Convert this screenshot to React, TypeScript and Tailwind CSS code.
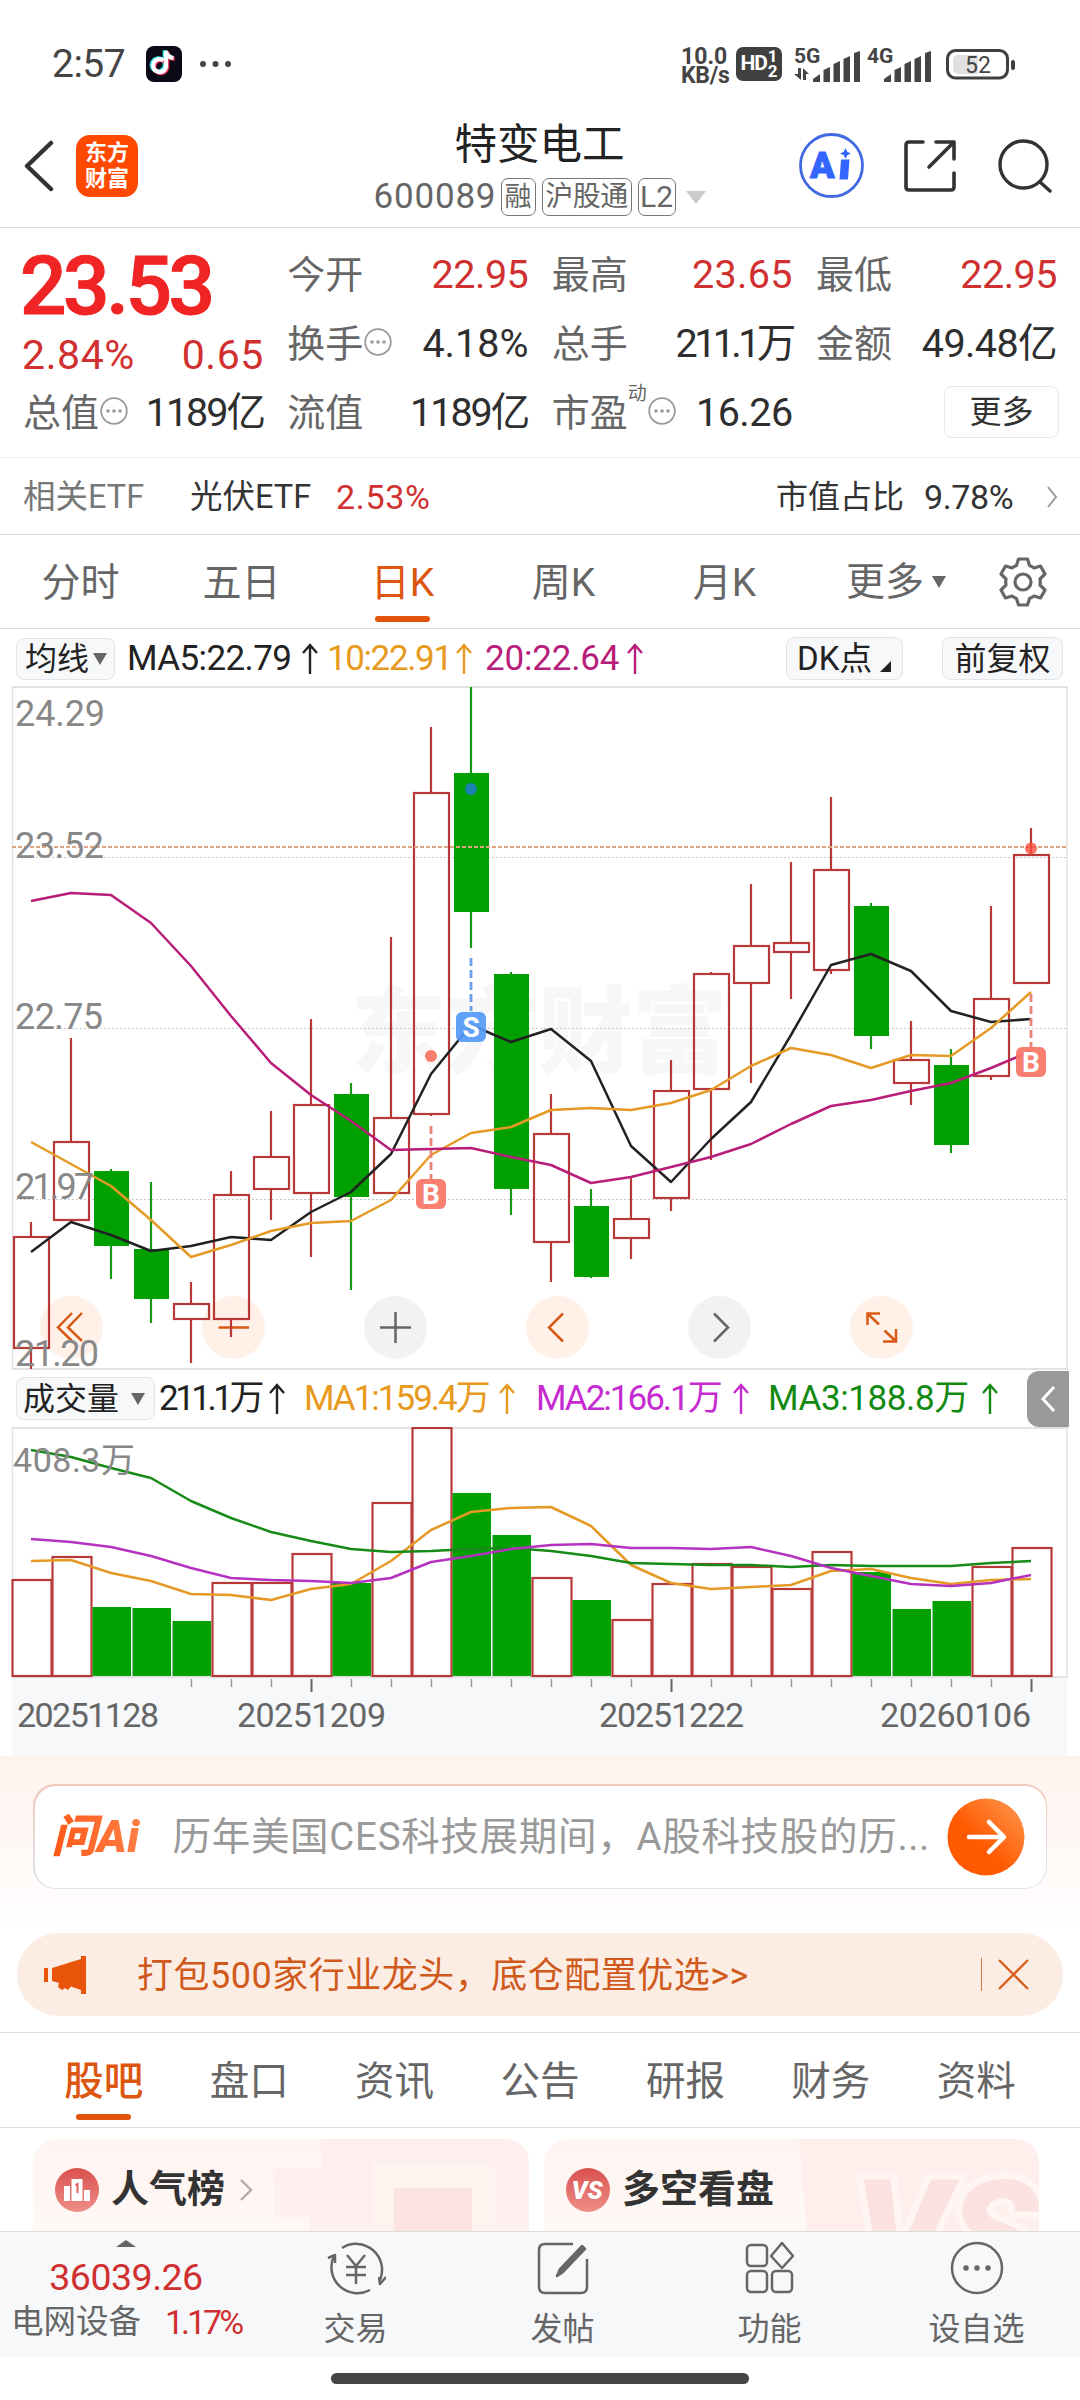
import { ReactNode } from "react";

type Candle = {
  up: boolean;
  high: number;
  top: number;
  bottom: number;
  low: number;
  volume: number;
  volumeUp: boolean;
};

const c = (
  up: boolean,
  high: number,
  top: number,
  bottom: number,
  low: number,
  volume: number,
  volumeUp = up
): Candle => ({ up, high, top, bottom, low, volume, volumeUp });

// y positions inside the chart, one entry per trading day
const candles: Candle[] = [
  c(true, 1222, 1237, 1348, 1369, 1580),
  c(true, 1038, 1142, 1220, 1220, 1557),
  c(false, 1169, 1171, 1246, 1279, 1607),
  c(false, 1182, 1249, 1299, 1323, 1608),
  c(true, 1282, 1304, 1319, 1363, 1621, false),
  c(true, 1171, 1195, 1319, 1337, 1583),
  c(true, 1111, 1157, 1189, 1220, 1583),
  c(true, 1019, 1105, 1193, 1257, 1554),
  c(false, 1083, 1094, 1197, 1290, 1583),
  c(true, 937, 1118, 1193, 1193, 1503),
  c(true, 727, 793, 1114, 1116, 1428),
  c(false, 687, 773, 912, 948, 1493),
  c(false, 972, 974, 1189, 1215, 1535),
  c(true, 1094, 1134, 1242, 1282, 1578),
  c(false, 1189, 1206, 1277, 1278, 1600),
  c(true, 1176, 1219, 1238, 1259, 1620),
  c(true, 1060, 1091, 1198, 1211, 1584),
  c(true, 972, 974, 1089, 1160, 1564),
  c(true, 884, 946, 983, 1083, 1567),
  c(true, 862, 943, 952, 999, 1589),
  c(true, 797, 870, 970, 974, 1552),
  c(false, 903, 906, 1036, 1049, 1572),
  c(true, 1021, 1060, 1083, 1105, 1609, false),
  c(false, 1049, 1065, 1145, 1153, 1601),
  c(true, 906, 999, 1076, 1080, 1567),
  c(true, 828, 855, 983, 983, 1548),
];

const ma5 = [1252, 1222, 1235, 1251, 1246, 1237, 1240, 1212, 1192, 1154, 1074, 1025, 1042, 1029, 1061, 1146, 1182, 1139, 1102, 1035, 965, 954, 971, 1011, 1022, 1019];
const ma10 = [1142, 1164, 1186, 1220, 1257, 1245, 1231, 1223, 1221, 1200, 1155, 1133, 1127, 1110, 1108, 1110, 1103, 1090, 1066, 1048, 1055, 1068, 1055, 1056, 1028, 992];
const ma20 = [901, 893, 895, 923, 966, 1016, 1063, 1095, 1121, 1150, 1149, 1148, 1157, 1165, 1183, 1177, 1167, 1157, 1144, 1124, 1106, 1100, 1091, 1083, 1068, 1051];
const vol1 = [1561, 1560, 1573, 1581, 1594, 1595, 1600, 1589, 1584, 1561, 1530, 1512, 1508, 1507, 1526, 1565, 1583, 1589, 1587, 1585, 1571, 1569, 1578, 1584, 1580, 1579];
const vol2 = [1539, 1542, 1547, 1556, 1568, 1578, 1580, 1581, 1583, 1578, 1562, 1556, 1549, 1545, 1544, 1548, 1548, 1549, 1547, 1556, 1568, 1576, 1584, 1586, 1583, 1575];
const vol3 = [1450, 1457, 1468, 1478, 1501, 1518, 1532, 1541, 1549, 1552, 1551, 1549, 1548, 1551, 1556, 1563, 1564, 1565, 1565, 1567, 1565, 1566, 1566, 1566, 1563, 1561];

const cx = (i: number) => 31 + i * 40;
const line = (ys: number[]) => ys.map((y, i) => `${cx(i)},${y}`).join(" ");

const RED = "#b83a38";
const GREEN = "#00a000";

function ChartText({ x, y, w, size = 36, fill = "#888", children }: { x: number; y: number; w: number; size?: number; fill?: string; children: ReactNode }) {
  return (
    <text x={x} y={y} textLength={w} fontSize={size} fill={fill}>
      {children}
    </text>
  );
}

function Badge({ x, y, color, label }: { x: number; y: number; color: string; label: string }) {
  return (
    <g>
      <rect x={x - 15} y={y - 15} width="30" height="30" rx="6" fill={color} opacity="0.92" />
      <text x={x} y={y + 10} textAnchor="middle" fontSize="28" fontWeight="700" fill="#fff">
        {label}
      </text>
    </g>
  );
}

function PriceChart() {
  return (
    <svg width="1080" height="684" viewBox="0 686 1080 684" className="block">
      <text x="351" y="1066" fontSize="95" textLength="376" fontWeight="900" fill="#f7f7f7">
        东方财富
      </text>
      <g stroke="#c8c8c8" strokeWidth="1" strokeDasharray="2 2">
        <path d="M12 857.5H1067M12 1028.5H1067M12 1199.5H1067" />
      </g>
      <path d="M12.5 687V1369M1067 687V1369" stroke="#e2e2e2" strokeWidth="1.5" />
      <path d="M12 687H1068M12 1369H1068" stroke="#e2e2e2" strokeWidth="2" />

      {[71.5, 233.5, 395.5, 557.5, 719.5, 881.5].map((x, i) => (
        <circle key={x} cx={x} cy="1327.5" r="31.5" fill={i === 2 || i === 4 ? "#f2f2f2" : "#fff0e8"} />
      ))}
      <g fill="none" stroke="#d95a14" strokeWidth="2.5">
        <path d="M72 1313L58 1327.500L72 1341M82 1313L68 1327.500L82 1341" />
        <path d="M218.500 1327.500H249" />
        <path d="M563 1313.500L549 1327.500L563 1341.500" />
        <path d="M867.500 1325V1313.500H880M867.500 1313.500L879 1324.500M896 1329V1341.500H883M896 1341.500L884.500 1330.500" />
      </g>
      <g fill="none" stroke="#666" strokeWidth="2.5">
        <path d="M380 1327.500H411M395.500 1312V1343" />
        <path d="M714 1313.500L728 1327.500L714 1341.500" />
      </g>

      {candles.map((k, i) =>
        k.up ? (
          <g key={i} stroke={RED} strokeWidth="2.2" fill="none">
            <path d={`M${cx(i)} ${k.high}V${k.top}M${cx(i)} ${k.bottom}V${k.low}`} />
            <rect x={cx(i) - 17} y={k.top} width="35" height={k.bottom - k.top} />
          </g>
        ) : (
          <g key={i}>
            <path d={`M${cx(i)} ${k.high}V${k.low}`} stroke="#179a17" strokeWidth="2.2" />
            <rect x={cx(i) - 17} y={k.top} width="35" height={k.bottom - k.top} fill={GREEN} />
          </g>
        )
      )}

      <path d="M12 847H1067" stroke="#dda582" strokeWidth="1.8" strokeDasharray="4 2" />
      <g fill="none" strokeWidth="2.5" strokeLinejoin="round">
        <polyline points={line(ma5)} stroke="#222" />
        <polyline points={line(ma10)} stroke="#e59a26" />
        <polyline points={line(ma20)} stroke="#b81d79" />
      </g>

      <circle cx="471" cy="789" r="6" fill="#1a83b4" />
      <path d="M471 958V1011" stroke="#6a9fe8" strokeWidth="2.8" strokeDasharray="8 4" />
      <Badge x={471} y={1027} color="#5499f7" label="S" />
      <circle cx="431" cy="1056" r="6" fill="#f97d6c" />
      <path d="M431 1126V1179" stroke="#e88474" strokeWidth="2.8" strokeDasharray="8 4" />
      <Badge x={431} y={1194} color="#f97565" label="B" />
      <circle cx="1031" cy="848.500" r="6" fill="#f9503c" opacity="0.8" />
      <path d="M1031 994V1047" stroke="#e88474" strokeWidth="2.8" strokeDasharray="8 4" />
      <Badge x={1031} y={1062} color="#f97565" label="B" />

      <ChartText x={15} y={726} w={90}>24.29</ChartText>
      <ChartText x={15} y={858} w={89}>23.52</ChartText>
      <ChartText x={15} y={1029} w={88}>22.75</ChartText>
      <ChartText x={15} y={1199} w={79}>21.97</ChartText>
      <ChartText x={15} y={1366} w={84}>21.20</ChartText>
    </svg>
  );
}

function VolumeChart() {
  return (
    <svg width="1080" height="251" viewBox="0 1427 1080 251" className="block">
      <path d="M12.500 1427V1678M1067 1427V1678" stroke="#e2e2e2" strokeWidth="1.5" />
      <path d="M12 1428H1068M12 1677H1068" stroke="#e2e2e2" strokeWidth="2" />
      {candles.map((k, i) =>
        k.volumeUp ? (
          <rect key={i} x={12.5 + i * 40} y={k.volume} width="39" height={1676 - k.volume} fill="none" stroke={RED} strokeWidth="2.2" />
        ) : (
          <rect key={i} x={12.5 + i * 40} y={k.volume} width="38.500" height={1676 - k.volume} fill={GREEN} />
        )
      )}
      <g fill="none" strokeWidth="2.5" strokeLinejoin="round">
        <polyline points={line(vol1)} stroke="#e59a26" />
        <polyline points={line(vol3)} stroke="#178a17" />
        <polyline points={line(vol2)} stroke="#b532c0" />
      </g>
      <ChartText x={13} y={1472} w={122} size={34}>408.3万</ChartText>
    </svg>
  );
}

function DateAxis() {
  return (
    <svg width="1055" height="78" viewBox="12 1678 1055 78" className="ml-3 block bg-[#f7f8fa]">
      {candles.slice(4).map((_, n) => {
        const i = n + 4;
        const major = i === 7 || i === 16 || i === 25;
        return (
          <path key={i} d={`M${cx(i) + 0.5} 1679V${major ? 1692 : 1687}`} stroke={major ? "#666" : "#999"} strokeWidth={major ? 2 : 1.5} />
        );
      })}
      <ChartText x={17} y={1727} w={142} size={34} fill="#666">20251128</ChartText>
      <ChartText x={237} y={1727} w={149} size={34} fill="#666">20251209</ChartText>
      <ChartText x={599} y={1727} w={145} size={34} fill="#666">20251222</ChartText>
      <ChartText x={880} y={1727} w={151} size={34} fill="#666">20260106</ChartText>
    </svg>
  );
}

function UpArrow({ className = "" }: { className?: string }) {
  return (
    <svg width="18" height="32" viewBox="0 0 18 32" className={`shrink-0 ${className}`} fill="none" stroke="currentColor" strokeWidth="2.400">
      <path d="M9 31V2M2 10L9 2L16 10" />
    </svg>
  );
}

function Triangle({ className }: { className: string }) {
  return (
    <svg viewBox="0 0 14 12" preserveAspectRatio="none" className={className} fill="currentColor">
      <path d="M0 0H14L7 12Z" />
    </svg>
  );
}

function Info() {
  return (
    <svg width="28" height="28" viewBox="0 0 28 28" className="-mt-1 ml-px shrink-0">
      <circle cx="14" cy="14" r="12.800" fill="none" stroke="#999" strokeWidth="1.800" />
      <circle cx="8" cy="14" r="1.800" fill="#999" />
      <circle cx="14" cy="14" r="1.800" fill="#999" />
      <circle cx="20" cy="14" r="1.800" fill="#999" />
    </svg>
  );
}

function Signal() {
  return (
    <svg width="48" height="31" viewBox="0 0 48 31" fill="#444">
      <path d="M0 31V28L7 23V31ZM10.500 31V19L17 16V31ZM20.500 31V13L27 10V31ZM30.500 31V8L37 5V31ZM41 31V2L47 0V31Z" />
    </svg>
  );
}

function StatusBar() {
  return (
    <div className="flex h-[110px] items-center pt-[18px] pl-[52px] text-[#444]">
      <span className="w-[94px] text-[39px] tracking-[-0.5px]">2:57</span>
      <svg width="36" height="36" viewBox="0 0 36 36">
        <rect width="36" height="36" rx="8" fill="#090a16" />
        <g fill="none" strokeWidth="4.200">
          <path d="M17.500 14.500a6.500 6.500 0 1 0 2.500 6V5c.5 4 3 6.500 7.500 7" stroke="#31e5e8" transform="translate(-1.300 -0.800)" />
          <path d="M17.500 14.500a6.500 6.500 0 1 0 2.500 6V5c.5 4 3 6.500 7.500 7" stroke="#f5325c" transform="translate(1.200 1)" />
          <path d="M17.500 14.500a6.500 6.500 0 1 0 2.500 6V5c.5 4 3 6.500 7.500 7" stroke="#fff" />
        </g>
      </svg>
      <svg width="34" height="8" viewBox="0 0 34 8" className="ml-[17px]" fill="#444">
        <circle cx="4" cy="4" r="3" />
        <circle cx="16.500" cy="4" r="3" />
        <circle cx="29" cy="4" r="3" />
      </svg>
      <div className="mt-1 ml-[448px] w-[55px] text-[23px] leading-[19px] font-bold">
        <div>10.0</div>
        <div className="tracking-[-0.3px]">KB/s</div>
      </div>
      <div className="flex h-[34px] w-[46px] items-center justify-center rounded-[7px] bg-[#404040] text-white">
        <span className="text-[21px] font-bold tracking-[-1px]">HD</span>
        <span className="ml-px text-[17px] leading-[15px] font-bold">
          <span className="block">1</span>
          <span className="block">2</span>
        </span>
      </div>
      <div className="ml-3 flex h-[34px] w-[30px] flex-col">
        <span className="text-[21px] leading-[18px] font-bold">5G</span>
        <svg width="15" height="12" viewBox="0 0 15 12" className="mt-[3px]" fill="#444">
          <path d="M4 0H7V12L0 6H4ZM9 12H12V6H15L9 0Z" />
        </svg>
      </div>
      <div className="mt-1 -ml-[11px] flex">
        <Signal />
      </div>
      <div className="ml-1.5 h-[34px] w-[30px] text-[21px] leading-[18px] font-bold">4G</div>
      <div className="mt-1 -ml-[13px]">
        <Signal />
      </div>
      <svg width="70" height="31" viewBox="0 0 70 31" className="ml-[14px]">
        <rect x="1.500" y="1.500" width="60" height="27.500" rx="8" fill="none" stroke="#404040" strokeWidth="3" />
        <path d="M12 6H32V25H12a5 5 0 0 1-5-5V11a5 5 0 0 1 5-5Z" fill="#e0e0e0" />
        <rect x="65" y="11" width="4" height="10" rx="2" fill="#404040" />
        <text x="32" y="23.500" fontSize="23" textAnchor="middle" fill="#444">
          52
        </text>
      </svg>
    </div>
  );
}

function Header() {
  return (
    <header className="flex h-[118px] border-b-[1.5px] border-[#dcdcdc]">
      <div className="flex w-[373px] items-center pb-1.5 pl-6">
        <svg width="30" height="52" viewBox="0 0 30 52" fill="none" stroke="#333" strokeWidth="4.500" strokeLinecap="round" strokeLinejoin="round">
          <path d="M27 3L3 26L27 49" />
        </svg>
        <div className="ml-[22px] flex h-[62px] w-[62px] items-center justify-center rounded-[14px] bg-[#ff4800] text-center text-[22px] leading-[26px] font-bold text-white">
          东方
          <br />
          财富
        </div>
      </div>
      <div className="flex w-[333px] flex-col items-center">
        <h1 className="mt-1.5 text-[42.500px] leading-[58px] text-[#222]">特变电工</h1>
        <div className="mt-[3px] flex h-[40px] items-center text-[30px] leading-[36px] text-[#666]">
          <span className="w-[127px] text-[35px] tracking-[0.8px]">600089</span>
          <span className="flex h-[38px] w-[35px] items-center justify-center rounded-[7px] border border-[#777] text-[27px]">融</span>
          <span className="ml-1.5 flex h-[38px] w-[90px] items-center justify-center rounded-[7px] border border-[#777] text-[28px] tracking-[-0.5px]">沪股通</span>
          <span className="ml-1.5 flex h-[38px] w-[38px] items-center justify-center rounded-[7px] border border-[#777] text-[30px]">L2</span>
          <Triangle className="ml-2.5 h-[13px] w-5 text-[#ccc]" />
        </div>
      </div>
      <div className="flex items-center pb-1.5 pl-[93px]">
        <svg width="65" height="65" viewBox="0 0 65 65">
          <circle cx="32.500" cy="32.500" r="31" fill="none" stroke="#4169e1" strokeWidth="2.800" />
          <text x="11" y="45" fontSize="36" fontWeight="900" fill="#3366ff" stroke="#3366ff" strokeWidth="1">
            A
          </text>
          <path d="M42 26.500h8.500L49 46.500h-8.500Z M46.500 15l1.700 3.700 3.700 1.800-3.700 1.800-1.700 3.700-1.700-3.700-3.700-1.800 3.700-1.800Z" fill="#3366ff" />
        </svg>
        <svg width="54" height="54" viewBox="0 0 54 54" className="ml-[39px]" fill="none" stroke="#333" strokeWidth="3.600" strokeLinecap="round" strokeLinejoin="round">
          <path d="M20 3H6Q3 3 3 6V48Q3 51 6 51H48Q51 51 51 48V34M33 3H51V20M51 3L26 28" />
        </svg>
        <svg width="54" height="54" viewBox="0 0 54 54" className="ml-[41px]" fill="none" stroke="#333" strokeWidth="3.400" strokeLinecap="round">
          <circle cx="25.500" cy="25.500" r="23.500" />
          <path d="M42 43L52 52" />
        </svg>
      </div>
    </header>
  );
}

function Stat({ label, value, info, note, className = "text-[#2e2e2e]" }: { label: string; value: string; info?: boolean; note?: string; className?: string }) {
  return (
    <div className="flex h-[69px] items-center pt-0.5 text-[38px] leading-none whitespace-nowrap">
      <span className="-ml-px text-[#666]">{label}</span>
      {note && <span className="-mt-[38px] text-[19px] text-[#666]">{note}</span>}
      {info && <Info />}
      <span className={`ml-auto text-[39.500px] ${className}`}>{value}</span>
    </div>
  );
}

function Quote() {
  return (
    <section className="flex h-[230px] justify-between border-b-[1.5px] border-[#ececec] pt-[11px] pr-[23px] pl-6">
      <div className="w-[240px]">
        <div className="-ml-1 h-[91px] text-[82px] leading-[94px] font-medium tracking-[-3.5px] text-[#f02424] [-webkit-text-stroke:1px_#f02424]">
          23.53
        </div>
        <div className="-ml-0.5 flex h-[47px] items-center justify-between pt-1 text-[41px] text-[#d0302f]">
          <span className="tracking-[0.6px]">2.84%</span>
          <span className="tracking-[0.6px]">0.65</span>
        </div>
        <Stat label="总值" value="1189亿" info className="tracking-[-2px] text-[#2e2e2e]" />
      </div>
      <div className="w-[240px]">
        <Stat label="今开" value="22.95" className="tracking-[-0.5px] text-[#d0302f]" />
        <Stat label="换手" value="4.18%" info />
        <Stat label="流值" value="1189亿" className="tracking-[-2px] text-[#2e2e2e]" />
      </div>
      <div className="w-[240px]">
        <Stat label="最高" value="23.65" className="tracking-[0.3px] text-[#d0302f]" />
        <Stat label="总手" value="211.1万" className="tracking-[-3.6px] text-[#2e2e2e]" />
        <Stat label="市盈" value="16.26" info note="动" className="tracking-[-0.5px] text-[#2e2e2e]" />
      </div>
      <div className="w-[240px]">
        <Stat label="最低" value="22.95" className="tracking-[-0.5px] text-[#d0302f]" />
        <Stat label="金额" value="49.48亿" className="tracking-[-0.6px] text-[#2e2e2e]" />
        <div className="mt-[9px] -mr-0.5 ml-auto flex h-[52px] w-[115px] items-center justify-center rounded-lg border-[1.5px] border-[#e8e8e8] text-[32px] text-[#333]">
          更多
        </div>
      </div>
    </section>
  );
}

function EtfRow() {
  return (
    <section className="flex h-[77px] items-center border-b-[1.5px] border-[#dcdcdc] pt-0.5 pr-[22px] pl-[23px] text-[32.500px] text-[#333]">
      <span className="w-[167px] text-[#777]">相关ETF</span>
      <span className="w-[146px]">光伏ETF</span>
      <span className="text-[34px] tracking-[0.7px] text-[#d0302f]">2.53%</span>
      <span className="ml-auto text-[32px]">市值占比</span>
      <span className="ml-5 w-[110px] text-[34px] tracking-[-0.4px]">9.78%</span>
      <svg width="12" height="22" viewBox="0 0 12 22" className="ml-3" fill="none" stroke="#999" strokeWidth="2">
        <path d="M2 1L10 11L2 21" />
      </svg>
    </section>
  );
}

const periods = ["分时", "五日", "日K", "周K", "月K"];

function PeriodTabs() {
  return (
    <nav className="flex h-[94px] border-b-[1.5px] border-[#dcdcdc] text-[39px] leading-[96px] text-[#666]">
      {periods.map((p) => (
        <div key={p} className={`flex w-[161px] flex-col items-center ${p === "日K" ? "text-[#dc560f]" : ""}`}>
          <span className="h-[81px]">{p}</span>
          {p === "日K" && <span className="h-[6px] w-[55px] rounded-full bg-[#e2530b]" />}
        </div>
      ))}
      <div className="ml-[41px] flex w-[153px] items-center">
        更多
        <Triangle className="ml-2 h-3 w-[14px]" />
      </div>
      <svg width="48" height="50" viewBox="0 0 48 50" className="mt-[22px]" fill="none" stroke="#666" strokeWidth="3.200" strokeLinejoin="round">
        <path d="M19.500 2H28.500L30.500 8.500Q33 9.500 35 11L41.500 9L46 17L41 22Q41.500 25 41 28L46 33L41.500 41L35 39Q33 40.500 30.500 41.500L28.500 48H19.500L17.500 41.500Q15 40.500 13 39L6.500 41L2 33L7 28Q6.500 25 7 22L2 17L6.500 9L13 11Q15 9.500 17.500 8.500Z" />
        <circle cx="24" cy="25" r="8" />
      </svg>
    </nav>
  );
}

function MaRow() {
  return (
    <div className="flex h-[57px] items-center pt-0.5 pl-4 text-[35px] leading-none whitespace-nowrap text-[#222]">
      <div className="flex h-[42px] w-[99px] items-center rounded-lg border border-[#e2e4e8] bg-[#f7f8fa] pl-2 text-[32px]">
        均线
        <Triangle className="ml-1 h-3 w-[14px] text-[#666]" />
      </div>
      <span className="ml-3 w-[174px] tracking-[-0.6px]">MA5:22.79</span>
      <UpArrow />
      <span className="ml-2 w-[128px] tracking-[-1.4px] text-[#e89a20]">10:22.91</span>
      <UpArrow className="text-[#e89a20]" />
      <span className="ml-3 w-[141px] tracking-[-0.2px] text-[#b81d79]">20:22.64</span>
      <UpArrow className="text-[#b81d79]" />
      <div className="ml-[142px] flex h-[43px] w-[117px] items-center rounded-lg border border-[#e2e4e8] bg-[#f7f8fa] pl-2.5 text-[33px]">
        DK点
        <svg width="11" height="11" viewBox="0 0 11 11" className="mt-4 ml-2">
          <path d="M11 0V11H0Z" fill="#222" />
        </svg>
      </div>
      <div className="ml-[39px] flex h-[43px] w-[121px] items-center justify-center rounded-lg border border-[#e2e4e8] bg-[#f7f8fa] text-[32px]">
        前复权
      </div>
    </div>
  );
}

function VolumeRow() {
  return (
    <div className="flex h-[57px] items-center pl-4 text-[35px] leading-none whitespace-nowrap text-[#222]">
      <div className="flex h-[43px] w-[139px] items-center rounded-lg border border-[#e2e4e8] bg-[#f7f8fa] pl-1.5 text-[32px]">
        成交量
        <Triangle className="ml-3 h-3 w-[14px] text-[#666]" />
      </div>
      <span className="ml-1 w-[109px] tracking-[-3.5px]">211.1万</span>
      <UpArrow />
      <span className="ml-[18px] w-[194px] tracking-[-2px] text-[#e89a20]">MA1:159.4万</span>
      <UpArrow className="text-[#e89a20]" />
      <span className="ml-5 w-[196px] tracking-[-2px] text-[#c52bd0]">MA2:166.1万</span>
      <UpArrow className="text-[#c52bd0]" />
      <span className="ml-[18px] w-[213px] tracking-[-0.4px] text-[#128a12]">MA3:188.8万</span>
      <UpArrow className="text-[#128a12]" />
      <div className="mr-[11px] ml-auto flex h-[56px] w-[42px] items-center justify-center rounded-l-[12px] bg-[#999]">
        <svg width="16" height="26" viewBox="0 0 16 26" fill="none" stroke="#fff" strokeWidth="3">
          <path d="M14 1L3 13L14 25" />
        </svg>
      </div>
    </div>
  );
}

function AskAi() {
  return (
    <section className="h-[177px] bg-linear-to-b from-[#fff2ed] to-white px-[33px] pt-7">
      <div className="rounded-[22px] bg-linear-to-b from-[#f2c8bc] to-[#dfe5ee] p-[1.5px]">
        <div className="flex h-[102px] items-center rounded-[21px] bg-white">
          <div className="w-[138px] bg-linear-to-r from-[#ff4f00] to-[#ff8a50] bg-clip-text pl-[17px] text-[45px] leading-[50px] font-black tracking-[0.5px] text-transparent italic">
            问Ai
          </div>
          <span className="w-[774px] text-[38.500px] tracking-[0.7px] whitespace-nowrap text-[#999]">历年美国CES科技展期间，A股科技股的历...</span>
          <svg width="78" height="78" viewBox="0 0 78 78">
            <defs>
              <linearGradient id="go" x1="0.2" y1="0.8" x2="0.9" y2="0.1">
                <stop offset="0.300" stopColor="#ff5a00" />
                <stop offset="1" stopColor="#ff8f45" />
              </linearGradient>
            </defs>
            <circle cx="39" cy="39" r="38.500" fill="url(#go)" />
            <path d="M22 39H56M42 24L57 39L42 54" fill="none" stroke="#fff" strokeWidth="4.500" strokeLinecap="round" strokeLinejoin="round" />
          </svg>
        </div>
      </div>
    </section>
  );
}

function Notice() {
  return (
    <div className="mx-[17px] flex h-[83px] items-center rounded-full bg-[#fcede4] pl-[27px] text-[#cf5a1c]">
      <svg width="43" height="38" viewBox="0 0 43 38" fill="#e8540a">
        <path d="M0 12H4V26H0ZM8 12L37 3V0H42V38H37V34L27 30.500L24 34L21 32L18 34L14 31L15 27L8 25Z" />
      </svg>
      <span className="mt-0.5 ml-[50px] text-[36px] tracking-[0.5px]">打包500家行业龙头，底仓配置优选&gt;&gt;</span>
      <span className="mr-4 ml-auto h-[33px] w-[1.5px] bg-[#d9773f]" />
      <svg width="31" height="31" viewBox="0 0 31 31" className="mr-[34px]" fill="none" stroke="#d9601c" strokeWidth="2.400">
        <path d="M1 1L30 30M30 1L1 30" />
      </svg>
    </div>
  );
}

const sections = ["股吧", "盘口", "资讯", "公告", "研报", "财务", "资料"];

function SectionTabs() {
  return (
    <nav className="mt-4 flex h-[96px] border-y-[1.5px] border-[#dcdcdc] px-[31px] text-[39.500px] leading-[97px] text-[#666]">
      {sections.map((s, i) => (
        <div key={s} className={`flex flex-1 flex-col items-center ${i === 0 ? "font-medium text-[#dc560f]" : ""}`}>
          <span className="h-[81px]">{s}</span>
          {i === 0 && <span className="h-[6px] w-[55px] rounded-full bg-[#e2530b]" />}
        </div>
      ))}
    </nav>
  );
}

function Cards() {
  return (
    <section className="flex h-[103px] gap-[15px] overflow-hidden pt-[11px] pl-[33px] text-[38px] font-bold text-[#333]">
      <div className="relative h-[120px] w-[496px] overflow-hidden rounded-[24px] bg-linear-to-b from-[#fff4f2] to-[#fffaf6]">
        <svg width="496" height="120" viewBox="0 0 496 120" className="absolute inset-0">
          <path d="M288 0H496V120H276V78H242V30H288Z" fill="#feeeec" opacity="0.8" />
          <path d="M340 23H462V120H340Z" fill="#fff3f0" />
          <path d="M361 49H439V120H361Z" fill="#fbe4e2" />
        </svg>
        <div className="relative flex h-[101px] items-center pl-[22px]">
          <svg width="44" height="44" viewBox="0 0 44 44">
            <defs>
              <linearGradient id="badge" x1="0" y1="0" x2="0" y2="1">
                <stop offset="0" stopColor="#d9504e" />
                <stop offset="1" stopColor="#ee8f89" />
              </linearGradient>
            </defs>
            <circle cx="22" cy="22" r="22" fill="url(#badge)" />
            <path d="M9 18H15V33H9ZM16.500 11H27.500V33H16.500ZM29 22H35V33H29Z" fill="#fff" />
            <path d="M20.500 17L22.500 16V25" fill="none" stroke="#dd615c" strokeWidth="2" />
          </svg>
          <span className="ml-3">人气榜</span>
          <svg width="13" height="22" viewBox="0 0 13 22" className="ml-[15px]" fill="none" stroke="#b5aaa8" strokeWidth="2.400">
            <path d="M1 1L11 11L1 21" />
          </svg>
        </div>
      </div>
      <div className="relative h-[120px] w-[495px] overflow-hidden rounded-[24px] bg-linear-to-b from-[#fff4f2] to-[#fffaf6]">
        <svg width="495" height="120" viewBox="0 0 495 120" className="absolute inset-0">
          <path d="M255 0H495V120H265Z" fill="#feeeec" />
          <text x="310" y="146" fontSize="148" fontWeight="900" fontStyle="italic" fill="#fbe2e0" stroke="#fff5f2" strokeWidth="14" paintOrder="stroke">
            VS
          </text>
        </svg>
        <div className="relative flex h-[101px] items-center pl-[22px]">
          <svg width="44" height="44" viewBox="0 0 44 44">
            <circle cx="22" cy="22" r="22" fill="url(#badge)" />
            <text x="21" y="31" fontSize="25" fontWeight="900" fontStyle="italic" textAnchor="middle" fill="#fff">
              VS
            </text>
          </svg>
          <span className="ml-3">多空看盘</span>
        </div>
      </div>
    </section>
  );
}

const actions = [
  {
    label: "交易",
    icon: (
      <>
        <path d="M16 9A26 26 0 0 1 54 41M44 51A26 26 0 0 1 8 17" />
        <path d="M2 19L9 16V24M60 38L54 45L53 38" />
        <path d="M21 16L30 27L39 16M30 27V45M20 28H40M20 36H40" />
      </>
    ),
  },
  {
    label: "发帖",
    icon: (
      <>
        <path d="M40 5H12Q6 5 6 11V48Q6 54 12 54H48Q54 54 54 48V20" />
        <path d="M24 37L27 30L49 7L52 10L30 33Z" fill="#666" />
      </>
    ),
  },
  {
    label: "功能",
    icon: (
      <>
        <rect x="7" y="6" width="20" height="21" rx="4" />
        <rect x="7" y="32" width="20" height="21" rx="4" />
        <rect x="32" y="32" width="20" height="21" rx="4" />
        <path d="M42 4L53 17L42 29L31 17Z" />
      </>
    ),
  },
  {
    label: "设自选",
    icon: (
      <>
        <circle cx="30" cy="29" r="25" />
        <circle cx="19" cy="29" r="1.500" fill="#666" />
        <circle cx="30" cy="29" r="1.500" fill="#666" />
        <circle cx="41" cy="29" r="1.500" fill="#666" />
      </>
    ),
  },
];

function BottomNav() {
  return (
    <nav className="flex h-[126px] border-t-[1.5px] border-[#dcdcdc] bg-[#f7f8fa] text-[#666]">
      <div className="flex w-[252px] flex-col items-center">
        <Triangle className="mt-2 h-[7px] w-5 rotate-180" />
        <div className="mt-[9px] text-[37.500px] leading-[42px] tracking-[-0.5px] text-[#d0302f]">36039.26</div>
        <div className="mt-px flex h-[46px] items-center text-[32.500px] whitespace-nowrap">
          电网设备
          <span className="ml-6 text-[34px] tracking-[-3px] text-[#d0302f]">1.17%</span>
        </div>
      </div>
      {actions.map((a) => (
        <div key={a.label} className="flex w-[207px] flex-col items-center">
          <svg width="60" height="60" viewBox="0 0 60 60" className="mt-[7px]" fill="none" stroke="#666" strokeWidth="2.500" strokeLinejoin="round">
            {a.icon}
          </svg>
          <span className="mt-2 text-[32px] leading-[44px]">{a.label}</span>
        </div>
      ))}
    </nav>
  );
}

function App() {
  return (
    <div className="h-[2400px] w-[1080px] overflow-hidden bg-white font-[Roboto,'Noto_Sans_CJK_SC',sans-serif]">
      <StatusBar />
      <Header />
      <Quote />
      <EtfRow />
      <PeriodTabs />
      <MaRow />
      <PriceChart />
      <VolumeRow />
      <VolumeChart />
      <DateAxis />
      <AskAi />
      <Notice />
      <SectionTabs />
      <Cards />
      <BottomNav />
      <div className="mx-auto mt-4 h-[11px] w-[418px] rounded-full bg-[#444]" />
    </div>
  );
}

export default App;
